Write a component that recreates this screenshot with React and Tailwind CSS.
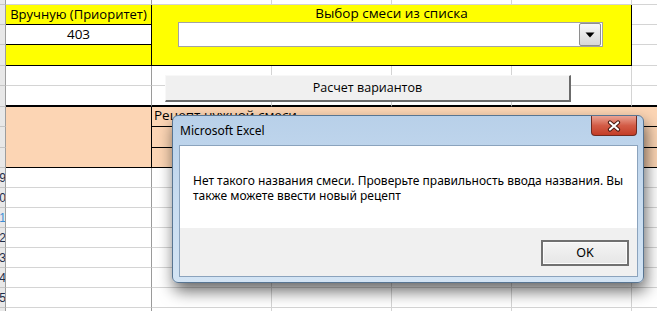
import React from "react";

// Excel sheet fragment with a Win7 style message box on top.
const ROW_START = [
  "row-start-1", "row-start-2", "row-start-3", "row-start-4", "row-start-5", "row-start-6",
  "row-start-7", "row-start-8", "row-start-9", "row-start-10", "row-start-11", "row-start-12",
  "row-start-13", "row-start-14", "row-start-15", "row-start-16", "row-start-17",
];
const COL_START = ["col-start-1", "col-start-2", "col-start-3", "col-start-4", "col-start-5", "col-start-6", "col-start-7"];

const ROW_LABELS = { 9: "19", 10: "20", 11: "21", 12: "22", 13: "23", 14: "24", 15: "25" };

// plain grid cells: [row, col]
const PLAIN = [];
for (let c = 1; c < 7; c++) PLAIN.push([0, c]);
for (let r = 1; r < 4; r++) PLAIN.push([r, 6]);
for (let r = 4; r < 6; r++) for (let c = 1; c < 7; c++) PLAIN.push([r, c]);
for (let r = 9; r < 17; r++) for (let c = 1; c < 7; c++) PLAIN.push([r, c]);

function plainClass(r, c) {
  let cls = "bg-white border-b border-r border-[#d4d4d4]";
  if (c === 1) cls += " border-r-[#9a9a9a]";
  if (r === 5) cls = cls.replace("border-b ", "border-b-2 ") + " border-b-black";
  return cls;
}

function ComboArrow() {
  return (
    <div className="w-[22px] h-[23px] rounded-[2px] border border-[#8e8e8e] bg-gradient-to-b from-[#f7f7f7] to-[#d8d8d8] flex items-center justify-center">
      <svg width="10" height="6" viewBox="0 0 10 6">
        <path d="M0.5 0.5 L9.5 0.5 L5 5.5 Z" fill="#000" />
      </svg>
    </div>
  );
}

function MessageBox() {
  return (
    <div className="absolute left-[172px] top-[115px] w-[472px] h-[168px] rounded-[6px] border border-[#587592] bg-gradient-to-b from-[#b8d0e9] via-[#c8dcf0] to-[#d3e4f4] pl-[6px] pr-[5px] pt-[29px] pb-[5px] shadow-[2px_8px_16px_rgba(0,0,0,0.6)] font-['Noto_Sans',sans-serif] text-black">
      <div className="absolute left-[7px] top-[7px] text-[12px] leading-[15px]">Microsoft Excel</div>
      <div className="absolute right-[6px] top-0 w-[46px] h-[20px] rounded-b-[4px] border border-t-0 border-[#6f2a20] bg-gradient-to-b from-[#e9a394] via-[#d35c47] to-[#c33c25] flex items-center justify-center">
        <svg width="16" height="12" viewBox="0 0 16 12">
          <path d="M4 2.5 L12 9.5 M12 2.5 L4 9.5" stroke="#4a1a12" strokeWidth="4.2" strokeLinecap="round" />
          <path d="M4 2.5 L12 9.5 M12 2.5 L4 9.5" stroke="#ffffff" strokeWidth="2.2" strokeLinecap="round" />
        </svg>
      </div>
      <div className="h-full border border-[#8ba3bd] flex flex-col">
        <div className="h-[82px] bg-white pl-[13px] pt-[27px] text-[12px] leading-[15px]">
          Нет такого названия смеси. Проверьте правильность ввода названия. Вы
          <br />
          также можете ввести новый рецепт
        </div>
        <div className="flex-1 bg-[#f0f0f0] flex justify-end items-start pt-[12px] pr-[8px]">
          <button className="w-[88px] h-[26px] border-2 border-[#707070] bg-gradient-to-b from-[#f4f4f4] to-[#e6e6e6] shadow-[inset_0_0_0_1px_#fbfbfb] text-[12.5px] leading-none">
            OK
          </button>
        </div>
      </div>
    </div>
  );
}

export default function App() {
  return (
    <div className="relative w-[657px] h-[311px] overflow-hidden bg-white font-['Open_Sans',sans-serif] text-black">
      <div className="grid grid-cols-[6px_146px_120px_120px_120px_120px_26px] grid-rows-[5px_20px_20px_21px_20px_21px_20px_21px_20px_20px_20px_20px_20px_20px_20px_20px_4px]">
        {/* row headers */}
        {ROW_START.map((rs, r) => (
          <div
            key={"h" + r}
            className={`${rs} col-start-1 bg-[#e8e8e8] border-b border-r border-b-[#c6c6c6] border-r-[#9d9d9d] overflow-hidden flex justify-end items-center text-[12px] leading-none font-['Liberation_Sans',sans-serif] ${r === 11 ? "text-[#3d8fd6]" : "text-[#1d2d48]"}`}
          >
            {ROW_LABELS[r] && <span className="mr-[-1px]">{ROW_LABELS[r]}</span>}
          </div>
        ))}

        {PLAIN.map(([r, c]) => (
          <div key={r + "-" + c} className={`${ROW_START[r]} ${COL_START[c]} ${plainClass(r, c)}`} />
        ))}

        {/* yellow input block, column A */}
        <div className="row-start-2 col-start-2 bg-[#ffff00] border-b border-r border-black flex items-center justify-center text-[13px] leading-none whitespace-nowrap">
          Вручную (Приоритет)
        </div>
        <div className="row-start-3 col-start-2 bg-white border-b border-r border-black flex items-center justify-center text-[13.5px] leading-none">
          403
        </div>
        <div className="row-start-4 col-start-2 bg-[#ffff00] border-b border-r border-black" />

        {/* yellow block B:E with the combo box */}
        <div className="row-start-2 row-span-3 col-start-3 col-span-4 bg-[#ffff00] border-b border-r border-black flex flex-col">
          <div className="h-[17px] flex items-center justify-center text-[13.5px] leading-none whitespace-nowrap">Выбор смеси из списка</div>
          <div className="ml-[26px] w-[425px] h-[25px] border border-[#a3a3a3] bg-white flex justify-end items-center pr-[1px]">
            <ComboArrow />
          </div>
        </div>

        {/* command button floating over rows 5-6 */}
        <button className="row-start-5 row-span-2 col-start-3 col-span-4 self-start justify-self-start ml-[13px] mt-[9px] w-[406px] h-[27px] bg-[#f0f0f0] border border-t-[#f8f8f8] border-l-[#f8f8f8] border-b-2 border-r-2 border-b-[#6b6b6b] border-r-[#6b6b6b] text-[12.5px] leading-none whitespace-nowrap">
          Расчет вариантов
        </button>

        {/* peach recipe block */}
        <div className="row-start-7 row-span-3 col-start-2 bg-[#fcd5b4] border-b border-r border-black" />
        <div className="row-start-7 col-start-3 col-span-5 bg-[#fcd5b4] border-b border-black pl-[2px] pt-[1px] text-[13.5px] leading-[15px] whitespace-nowrap overflow-hidden">
          Рецепт нужной смеси
        </div>
        <div className="row-start-8 col-start-3 col-span-5 bg-[#fcd5b4] border-b border-black" />
        <div className="row-start-9 col-start-3 col-span-5 bg-[#fcd5b4] border-b border-black" />
      </div>

      <MessageBox />
    </div>
  );
}
